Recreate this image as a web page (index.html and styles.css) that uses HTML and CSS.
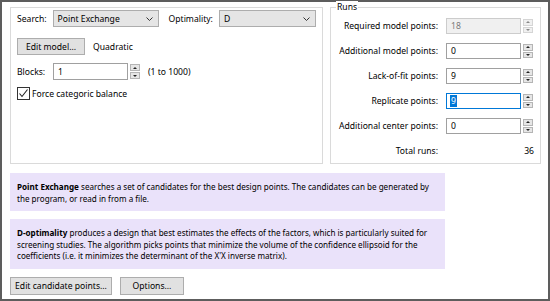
FILE: index.html
```html
<!DOCTYPE html>
<html>
<head>
<meta charset="utf-8">
<link rel="stylesheet" href="styles.css">
</head>
<body>
<div class="dialog">
  <div class="top">
    <div class="panel">
      <div class="row r1">
        <span class="lbl lbl-search">Search:</span>
        <span class="select sel-search">Point Exchange<svg class="chev" width="7" height="4" viewBox="0 0 7 4"><polyline points="0.5,0.5 3.5,3.5 6.5,0.5" fill="none" stroke="#333" stroke-width="1"/></svg></span>
        <span class="lbl lbl-opt">Optimality:</span>
        <span class="select sel-opt">D<svg class="chev" width="7" height="4" viewBox="0 0 7 4"><polyline points="0.5,0.5 3.5,3.5 6.5,0.5" fill="none" stroke="#333" stroke-width="1"/></svg></span>
      </div>
      <div class="row r2">
        <span class="btn btn-model">Edit model...</span>
        <span class="model">Quadratic</span>
      </div>
      <div class="row r3">
        <span class="lbl lbl-search">Blocks:</span>
        <span class="spinbox big">
          <span class="field">1</span>
          <span class="spinner"><span class="up"></span><span class="down"></span></span>
        </span>
        <span class="range">(1 to 1000)</span>
      </div>
      <div class="row r4">
        <span class="check"><svg width="11" height="11" viewBox="0 0 11 11"><polyline points="1.5,5.5 4,8.5 9.5,1.5" fill="none" stroke="#222" stroke-width="1.1"/></svg></span>
        <span>Force categoric balance</span>
      </div>
    </div>
    <div class="groupbox">
      <span class="legend">Runs</span>
      <div class="runs">
        <span class="rlbl">Required model points:</span>
        <span class="spinbox"><span class="field disabled">18</span><span class="spinner dis"><span class="up"></span><span class="down"></span></span></span>
        <span class="rlbl">Additional model points:</span>
        <span class="spinbox"><span class="field">0</span><span class="spinner"><span class="up"></span><span class="down"></span></span></span>
        <span class="rlbl">Lack-of-fit points:</span>
        <span class="spinbox"><span class="field">9</span><span class="spinner"><span class="up"></span><span class="down"></span></span></span>
        <span class="rlbl">Replicate points:</span>
        <span class="spinbox"><span class="field focus"><span class="selected">9</span></span><span class="spinner"><span class="up"></span><span class="down"></span></span></span>
        <span class="rlbl">Additional center points:</span>
        <span class="spinbox"><span class="field">0</span><span class="spinner"><span class="up"></span><span class="down"></span></span></span>
        <span class="rlbl total">Total runs:</span>
        <span class="tval">36</span>
      </div>
    </div>
  </div>
  <div class="note n1"><b>Point Exchange</b> searches a set of candidates for the best design points. The candidates can be generated by the program, or read in from a file.</div>
  <div class="note n2"><b>D-optimality</b> produces a design that best estimates the effects of the factors, which is particularly suited for screening studies. The algorithm picks points that minimize the volume of the confidence ellipsoid for the coefficients (i.e. it minimizes the determinant of the X'X inverse matrix).</div>
  <div class="buttons">
    <span class="btn btn-cand">Edit candidate points...</span>
    <span class="btn btn-opts">Options...</span>
  </div>
</div>
</body>
</html>
```
FILE: styles.css
```css
html, body {
  margin: 0;
  padding: 0;
  background: #fff;
}
body {
  font-family: "Noto Sans", sans-serif;
  font-size: 8.6px;
  color: #000;
}
.dialog {
  width: 550px;
  height: 301px;
  box-sizing: border-box;
  border: 2px solid #5d5d5d;
  padding: 5px 7px 0 8px;
  display: flex;
  flex-direction: column;
}
.top {
  display: flex;
  gap: 7px;
  height: 157px;
}
.panel {
  width: 313px;
  box-sizing: border-box;
  border: 1px solid #dadada;
  padding: 2px 6px;
}
.row {
  display: flex;
  align-items: center;
}
.r1 { height: 17px; }
.r2 { height: 17px; margin-top: 11px; }
.r3 { height: 17px; margin-top: 8px; }
.r4 { height: 13px; margin-top: 7px; }
.lbl-search { width: 36px; }
.lbl-opt { width: 51px; margin-left: 10px; }
.select {
  box-sizing: border-box;
  height: 17px;
  border: 1px solid #adadad;
  background: #e5e5e5;
  display: flex;
  align-items: center;
  padding-left: 4px;
  position: relative;
}
.sel-search { width: 107px; }
.sel-opt { width: 98px; }
.chev {
  position: absolute;
  right: 5px;
  top: 6px;
}
.btn {
  box-sizing: border-box;
  border: 1px solid #adadad;
  background: #e1e1e1;
  display: flex;
  align-items: center;
  justify-content: center;
}
.btn-model { width: 68px; height: 17px; }
.model { margin-left: 8px; }
.spinbox {
  display: flex;
  height: 16px;
}
.spinbox.big { height: 17px; }
.field {
  box-sizing: border-box;
  width: 75px;
  height: 100%;
  border: 1px solid #a0a0a0;
  background: #fff;
  padding-left: 4px;
  display: flex;
  align-items: center;
}
.field.disabled {
  background: #f0f0f0;
  border-color: #cccccc;
  color: #7a7a7a;
}
.field.focus {
  border-color: #0078d7;
  padding-left: 3px;
}
.selected {
  background: #0078d7;
  color: #fff;
  padding: 0 1px;
  line-height: 12px;
}
.spinner {
  box-sizing: border-box;
  width: 13px;
  height: 100%;
  display: flex;
  flex-direction: column;
  padding: 1px 1px 1px 2px;
  gap: 1px;
}
.spinner span {
  flex: 1;
  background: #e6e6e6;
  border: 1px solid #b5b5b5;
  position: relative;
}
.spinner.dis span {
  background: #f0f0f0;
  border-color: #d5d5d5;
}
.spinner .up::after,
.spinner .down::after {
  content: "";
  position: absolute;
  left: 50%;
  top: 50%;
  margin-left: -2px;
  border-left: 2px solid transparent;
  border-right: 2px solid transparent;
}
.spinner .up::after {
  margin-top: -1px;
  border-bottom: 2px solid #222;
}
.spinner .down::after {
  margin-top: -1px;
  border-top: 2px solid #222;
}
.spinner.dis .up::after { border-bottom-color: #888; }
.spinner.dis .down::after { border-top-color: #888; }
.range { margin-left: 7px; }
.check {
  box-sizing: border-box;
  width: 13px;
  height: 13px;
  border: 1px solid #333;
  background: #fff;
  margin-right: 2px;
  display: flex;
  align-items: center;
  justify-content: center;
}
.groupbox {
  position: relative;
  width: 211px;
  box-sizing: border-box;
  border: 1px solid #dadada;
  padding: 10px 6px 0 0;
}
.legend {
  position: absolute;
  top: -7px;
  left: 5px;
  background: #fff;
  padding: 0 1px;
  line-height: 12px;
}
.runs {
  display: grid;
  grid-template-columns: 1fr 88px;
  grid-auto-rows: 16px;
  column-gap: 8px;
  row-gap: 9px;
  align-items: center;
}
.rlbl { text-align: right; }
.tval { text-align: right; }
.note {
  margin-top: 9px;
  width: 435px;
  box-sizing: border-box;
  background: #eae2fa;
  padding: 8px 6px 7px 7px;
  font-size: 8.1px;
  line-height: 11.5px;
}
.n2 { margin-top: 8px; }
.buttons {
  display: flex;
  gap: 8px;
  margin-top: 8px;
}
.btn-cand { width: 102px; height: 18px; }
.btn-opts { width: 64px; height: 18px; }
```
